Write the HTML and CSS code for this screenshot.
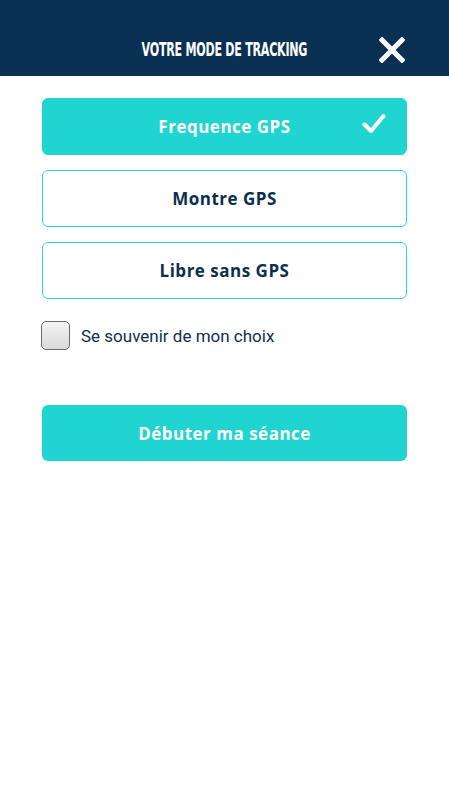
FILE: index.html
```html
<!DOCTYPE html>
<html lang="fr">
<head>
  <meta charset="UTF-8">
  <meta name="viewport" content="width=device-width, initial-scale=1.0">
  <title>Votre mode de tracking</title>
  <link rel="stylesheet" href="styles.css">
</head>
<body>
  <header class="topbar">
    <h1 class="topbar-title">Votre mode de tracking</h1>
    <button class="close-btn" aria-label="Fermer">
      <svg width="26" height="26" viewBox="0 0 26 26">
        <path d="M3 3 L23 23 M23 3 L3 23" stroke="#fff" stroke-width="5" stroke-linecap="square" fill="none"/>
      </svg>
    </button>
  </header>

  <main class="content">
    <div class="modes">
      <button class="mode selected">
        Frequence GPS
        <svg class="check" width="24" height="22" viewBox="0 0 24 22">
          <path d="M2.5 11.5 L9 18 L21.5 3" stroke="#fff" stroke-width="4" stroke-linecap="round" stroke-linejoin="round" fill="none"/>
        </svg>
      </button>
      <button class="mode">Montre GPS</button>
      <button class="mode">Libre sans GPS</button>
    </div>

    <label class="remember">
      <span class="box"></span>
      Se souvenir de mon choix
    </label>

    <button class="start">Débuter ma séance</button>
  </main>
</body>
</html>
```

FILE: styles.css
```css
body {
  margin: 0;
  padding: 0;
  background: #fff;
  font-family: "Open Sans", sans-serif;
  color: #0c2f4f;
}

.topbar {
  height: 76px;
  background-color: #0a3153;
  display: flex;
  align-items: center;
  justify-content: center;
  position: relative;
}

.topbar-title {
  margin: 0;
  padding-top: 22px;
  color: #fff;
  font-family: "DejaVu Sans", sans-serif;
  font-stretch: condensed;
  font-weight: bold;
  font-size: 19px;
  text-transform: uppercase;
  letter-spacing: -0.4px;
  transform: scaleX(0.65);
}

.close-btn {
  position: absolute;
  right: 44px;
  top: 37px;
  padding: 0;
  border: none;
  background: none;
  width: 26px;
  height: 26px;
}

.content {
  padding: 22px 42px 0 42px;
}

.modes {
  display: flex;
  flex-direction: column;
  gap: 15px;
}

button {
  font-family: "Open Sans", sans-serif;
  cursor: pointer;
}

.mode {
  position: relative;
  height: 57px;
  border: 1.5px solid #2dd5d5;
  border-radius: 6px;
  background: #fff;
  color: #0c2f4f;
  font-size: 17px;
  font-weight: bold;
  letter-spacing: 0.5px;
}

.mode.selected {
  background: #1fd4d1;
  border-color: #1fd4d1;
  color: #fff;
}

.check {
  position: absolute;
  right: 20px;
  top: 14px;
}

.remember {
  display: flex;
  align-items: center;
  gap: 11px;
  margin-top: 22px;
  margin-left: -1px;
  font-family: Roboto, sans-serif;
  font-size: 17px;
  color: #0c2f4f;
}

.box {
  width: 27px;
  height: 27px;
  border: 1.5px solid #6a6a6a;
  border-radius: 5px;
  background: linear-gradient(#f4f4f4, #d9d9d9);
}

.start {
  display: block;
  width: 100%;
  height: 56px;
  margin-top: 55px;
  border: none;
  border-radius: 6px;
  background: #1fd4d1;
  color: #fff;
  font-size: 17px;
  font-weight: bold;
  letter-spacing: 0.5px;
}
```
